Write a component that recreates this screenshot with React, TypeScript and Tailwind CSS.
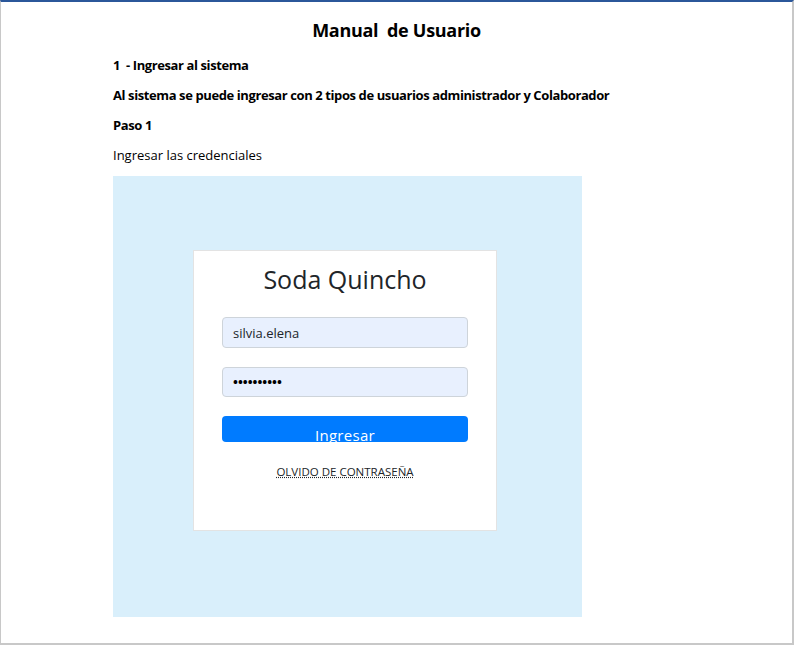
export default function App() {
  return (
    <div className="w-[794px] h-[645px] bg-white relative overflow-hidden border-l border-l-[#c8c8c8] border-r-2 border-r-[#c8c8c8] border-b-2 border-b-[#c8c8c8] border-t-2 border-t-[#2b579a]" style={{ fontFamily: '"Open Sans", "Liberation Sans", sans-serif' }}>
      <div className="flex flex-col">
        <h1 className="text-center text-[18px] font-bold text-black mt-[17px] leading-[22px] tracking-[-0.3px]">Manual&nbsp; de Usuario</h1>
        <div className="pl-[112px] text-[13px] text-black leading-[16px] tracking-[-0.4px]">
          <p className="font-bold mt-[16px]">1&nbsp; - Ingresar al sistema</p>
          <p className="font-bold mt-[14px]">Al sistema se puede ingresar con 2 tipos de usuarios administrador y Colaborador</p>
          <p className="font-bold mt-[14px]">Paso 1</p>
          <p className="mt-[14px] tracking-[0px]">Ingresar las credenciales</p>
          <div className="mt-[13px] w-[469px] h-[441px] bg-[#d9effb] flex flex-col items-start pt-[74px]">
            <div className="ml-[80px] w-[304px] h-[281px] bg-white border border-[#e3e3e3] flex flex-col items-center pt-[12px]">
              <div className="text-[25px] text-[#212529] leading-[32px] tracking-[0px]">Soda Quincho</div>
              <div className="mt-[22px] w-[246px] h-[31px] rounded-[4px] bg-[#e8f0fe] border border-[#ced4da] flex items-center px-[10px] text-[13px] text-[#212529] tracking-[0px]">silvia.elena</div>
              <div className="mt-[19px] w-[246px] h-[30px] rounded-[4px] bg-[#e8f0fe] border border-[#ced4da] flex items-center px-[10px] text-[13px] text-black tracking-[0px] font-bold">••••••••••</div>
              <div className="mt-[19px] w-[246px] h-[26px] rounded-[4px] bg-[#007bff] flex justify-center overflow-hidden">
                <span className="text-white text-[15px] leading-[15px] mt-[12px] tracking-[0.3px]">Ingresar</span>
              </div>
              <div className="mt-[22px] text-[11.5px] text-[#212529] underline decoration-dotted tracking-[0px]">OLVIDO DE CONTRASEÑA</div>
            </div>
          </div>
        </div>
      </div>
    </div>
  );
}
